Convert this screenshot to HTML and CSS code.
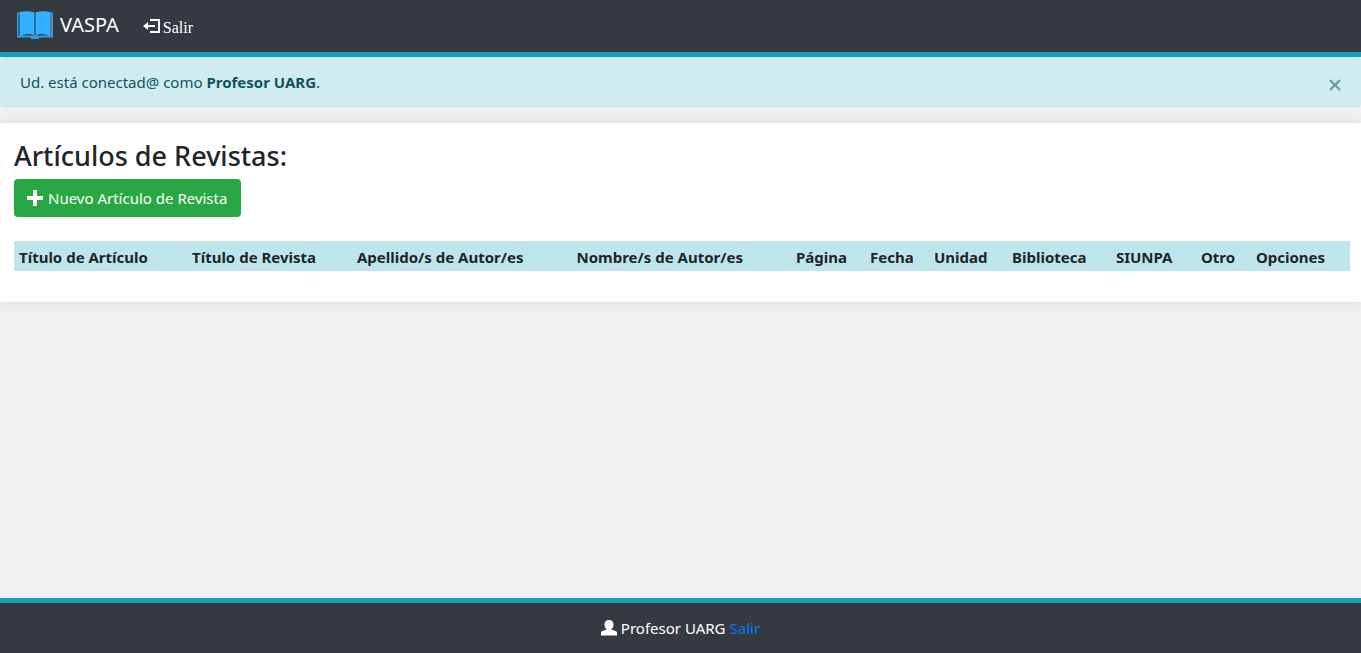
FILE: index.html
```html
<!DOCTYPE html>
<html lang="es">
<head>
<meta charset="utf-8">
<meta name="viewport" content="width=device-width, initial-scale=1">
<title>VASPA</title>
<link rel="stylesheet" href="styles.css">
</head>
<body>
<header class="navbar">
  <a class="brand" href="#">
    <svg class="brand-logo" width="38" height="30" viewBox="0 0 38 30" aria-hidden="true">
      <path fill="#2f9fe6" d="M1 2.500h36V27.500H23V29h-8v-1.500H1z"/>
      <path fill="#343a40" d="M2.500 4h1v21.500h-1z"/>
      <path fill="#5a7c98" d="M34 4h2v22h-2z"/>
      <path fill="#343a40" d="M6 25.500c4-1.800 9-1.800 12.500 0h1c3.500-1.800 8.500-1.800 12.500 0z"/>
      <path fill="#33b1ff" d="M4 2C9 1 14 1 18.300 2.500V25C14 22.500 9 23 4 25.500zM19.700 2.500C24 1 29 1 34 2v23.500c-5-2.500-10-3-14.300-.5z"/>
      <path fill="#343a40" d="M18.500 2.500h1V25h-1z"/>
    </svg>
    <span>VASPA</span>
  </a>
  <a class="nav-link" href="#">
    <svg width="17" height="14" viewBox="0 0 17 14" aria-hidden="true">
      <path fill="#fff" d="M0 7l5-4v3h7v2H5v3zM7 0h10v14H7v-2h8V2H7z"/>
    </svg>
    <span>Salir</span>
  </a>
</header>
<div class="alert" role="alert">
  <span>Ud. está conectad@ como <strong>Profesor UARG</strong>.</span>
  <button class="close" type="button" aria-label="Cerrar">
    <svg width="12" height="12" viewBox="0 0 12 12" aria-hidden="true"><path d="M1 1l10 10M11 1l-10 10" stroke="#6b9ca4" stroke-width="2.300"/></svg>
  </button>
</div>
<main class="panel">
  <h2 class="title">Artículos de Revistas:</h2>
  <button class="btn" type="button">
    <svg width="16" height="16" viewBox="0 0 16 16" aria-hidden="true"><path fill="#fff" d="M6 0h4v6h6v4h-6v6H6v-6H0V6h6z"/></svg>
    <span>Nuevo Artículo de Revista</span>
  </button>
  <table class="table">
    <colgroup>
      <col class="col-title"><col class="col-journal"><col class="col-author"><col class="col-author"><col class="col-page"><col class="col-date"><col class="col-unit"><col class="col-library"><col class="col-siunpa"><col class="col-other"><col>
    </colgroup>
    <thead>
      <tr>
        <th scope="col">Título de Artículo</th>
        <th scope="col">Título de Revista</th>
        <th scope="col">Apellido/s de Autor/es</th>
        <th scope="col">Nombre/s de Autor/es</th>
        <th scope="col">Página</th>
        <th scope="col">Fecha</th>
        <th scope="col">Unidad</th>
        <th scope="col">Biblioteca</th>
        <th scope="col">SIUNPA</th>
        <th scope="col">Otro</th>
        <th scope="col">Opciones</th>
      </tr>
    </thead>
  </table>
</main>
<footer class="footer">
  <svg width="16" height="16" viewBox="0 0 16 16" aria-hidden="true"><path fill="#fff" d="M8 0c3 0 4.500 2 4.500 4.500 0 2.200-.8 4-2.200 5l4.200 1.500c1 .4 1.500 1 1.500 2v2.500H0V13c0-1 .5-1.600 1.500-2l4.200-1.500c-1.400-1-2.200-2.800-2.200-5C3.500 2 5 0 8 0z"/></svg>
  <span>Profesor UARG</span>
  <a href="#">Salir</a>
</footer>
</body>
</html>
```
FILE: styles.css
```css
* { box-sizing: border-box; }

body {
  display: flex;
  flex-direction: column;
  min-height: 100vh;
  margin: 0;
  background: #f1f1f1;
  color: #212529;
  font-family: "Noto Sans", "Open Sans", sans-serif;
  font-size: 15px;
  line-height: 24px;
}

svg { flex: none; }

.navbar {
  display: flex;
  align-items: center;
  gap: 24px;
  padding: 9px 16px 11px;
  background: #343a40;
  border-bottom: 5px solid #17a2b8;
}

.brand,
.nav-link {
  display: flex;
  align-items: center;
  color: #fff;
  text-decoration: none;
}

.brand {
  gap: 6px;
  font-size: 20px;
  line-height: 32px;
}

.nav-link {
  gap: 3px;
  padding-top: 2px;
  font-family: "Liberation Serif", serif;
  font-size: 16px;
}

.nav-link span { padding-top: 4px; }

.alert {
  display: flex;
  align-items: center;
  justify-content: space-between;
  margin-bottom: 16px;
  padding: 12px 20px;
  background: #d1ecf1;
  border: 1px solid #bee5eb;
  border-width: 1px 0;
  border-radius: 4px;
  color: #0c5460;
}

.close {
  display: flex;
  padding: 5px 0 0;
  background: none;
  border: 0;
}

.panel {
  padding: 16px 11px 31px 14px;
  background: #fff;
  box-shadow: 0 0 12px rgba(0, 0, 0, 0.1);
}

.title {
  margin: 0 0 6px;
  font-size: 27px;
  font-weight: 500;
  line-height: 34px;
}

.btn {
  display: flex;
  align-items: center;
  gap: 5px;
  padding: 7px 14px 7px 13px;
  background: #28a745;
  border: 0;
  border-radius: 4px;
  color: #fff;
  font: inherit;
}

.table {
  width: 100%;
  margin-top: 24px;
  border-collapse: collapse;
  table-layout: fixed;
}

.table th {
  padding: 4px 0 2px 5px;
  background: #bee5eb;
  text-align: left;
  white-space: nowrap;
}

.col-title { width: 12.95%; }
.col-journal { width: 12.35%; }
.col-author { width: 16.43%; }
.col-page { width: 5.54%; }
.col-date { width: 4.79%; }
.col-unit { width: 5.84%; }
.col-library { width: 7.78%; }
.col-siunpa { width: 6.36%; }
.col-other { width: 4.12%; }

.footer {
  display: flex;
  align-items: center;
  justify-content: center;
  gap: 4px;
  margin-top: auto;
  padding: 13px 0;
  background: #343a40;
  border-top: 5px solid #17a2b8;
  color: #fff;
}

.footer a {
  color: #007bff;
  text-decoration: none;
}
```
